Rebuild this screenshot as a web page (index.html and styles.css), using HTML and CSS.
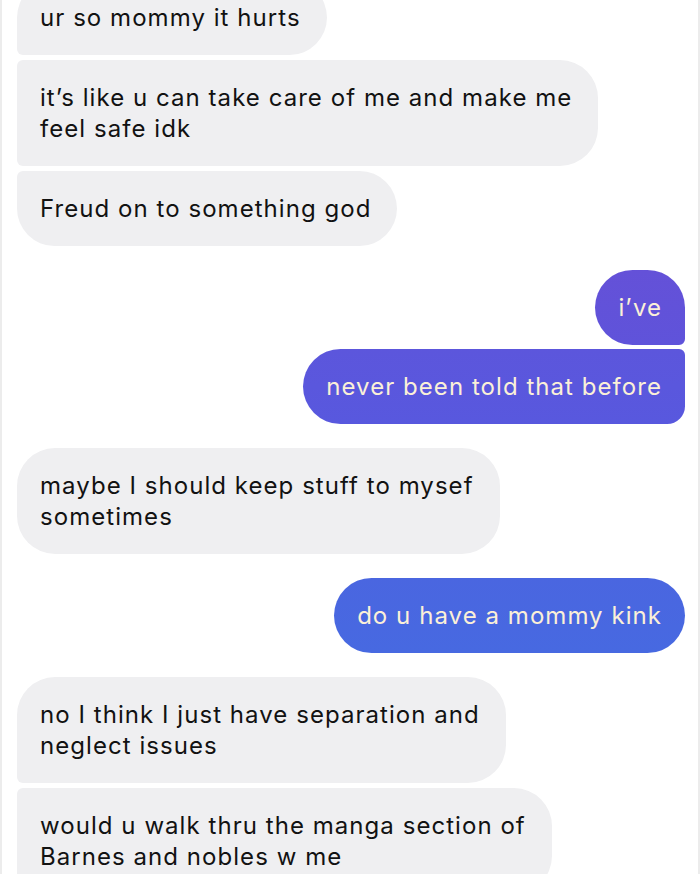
FILE: index.html
```html
<!DOCTYPE html>
<html>
<head>
<meta charset="utf-8">
<link rel="stylesheet" href="styles.css">
</head>
<body>
<div class="frame">
  <div class="thread">
    <div class="group in">
      <div class="msg first">ur so mommy it hurts</div>
      <div class="msg mid">it’s like u can take care of me and make me<br>feel safe idk</div>
      <div class="msg last">Freud on to something god</div>
    </div>
    <div class="group out">
      <div class="msg first c1">i’ve</div>
      <div class="msg last c2">never been told that before</div>
    </div>
    <div class="group in">
      <div class="msg single">maybe I should keep stuff to mysef<br>sometimes</div>
    </div>
    <div class="group out">
      <div class="msg single c3">do u have a mommy kink</div>
    </div>
    <div class="group in">
      <div class="msg first">no I think I just have separation and<br>neglect issues</div>
      <div class="msg mid">would u walk thru the manga section of<br>Barnes and nobles w me</div>
    </div>
  </div>
</div>
</body>
</html>
```
FILE: styles.css
```css
html, body {
  margin: 0;
  padding: 0;
  background: #ffffff;
}
.frame {
  width: 700px;
  height: 874px;
  overflow: hidden;
  box-sizing: border-box;
  border-left: 2px solid #ececec;
  border-right: 2px solid #ececec;
  background: #fff;
}
.thread {
  margin-top: -20px;
  display: flex;
  flex-direction: column;
  gap: 24px;
  padding: 0 13px 0 15px;
  font-family: Inter, "Noto Sans", sans-serif;
  font-size: 24px;
  letter-spacing: 1.05px;
  line-height: 31px;
}
.group {
  display: flex;
  flex-direction: column;
  gap: 5px;
}
.group.out {
  align-items: flex-end;
  gap: 4px;
}
.group.in {
  align-items: flex-start;
}
.msg {
  padding: 22px 23px 22px 23px;
  border-radius: 38px;
  white-space: nowrap;
}
.in .msg {
  background: #efeff1;
  color: #121212;
  padding-right: 26px;
}
.out .msg {
  color: #fbf0d8;
}
.in .first { border-bottom-left-radius: 6px; }
.in .mid { border-top-left-radius: 6px; border-bottom-left-radius: 6px; }
.in .last { border-top-left-radius: 6px; }
.out .first { border-bottom-right-radius: 6px; }
.out .last { border-top-right-radius: 6px; border-bottom-right-radius: 18px; }
.c1 { background: linear-gradient(180deg, #6451d8, #5f53da); }
.c2 { background: linear-gradient(180deg, #5c56dc, #5858de); }
.c3 { background: linear-gradient(180deg, #4a66e0, #4769e1); }
```
